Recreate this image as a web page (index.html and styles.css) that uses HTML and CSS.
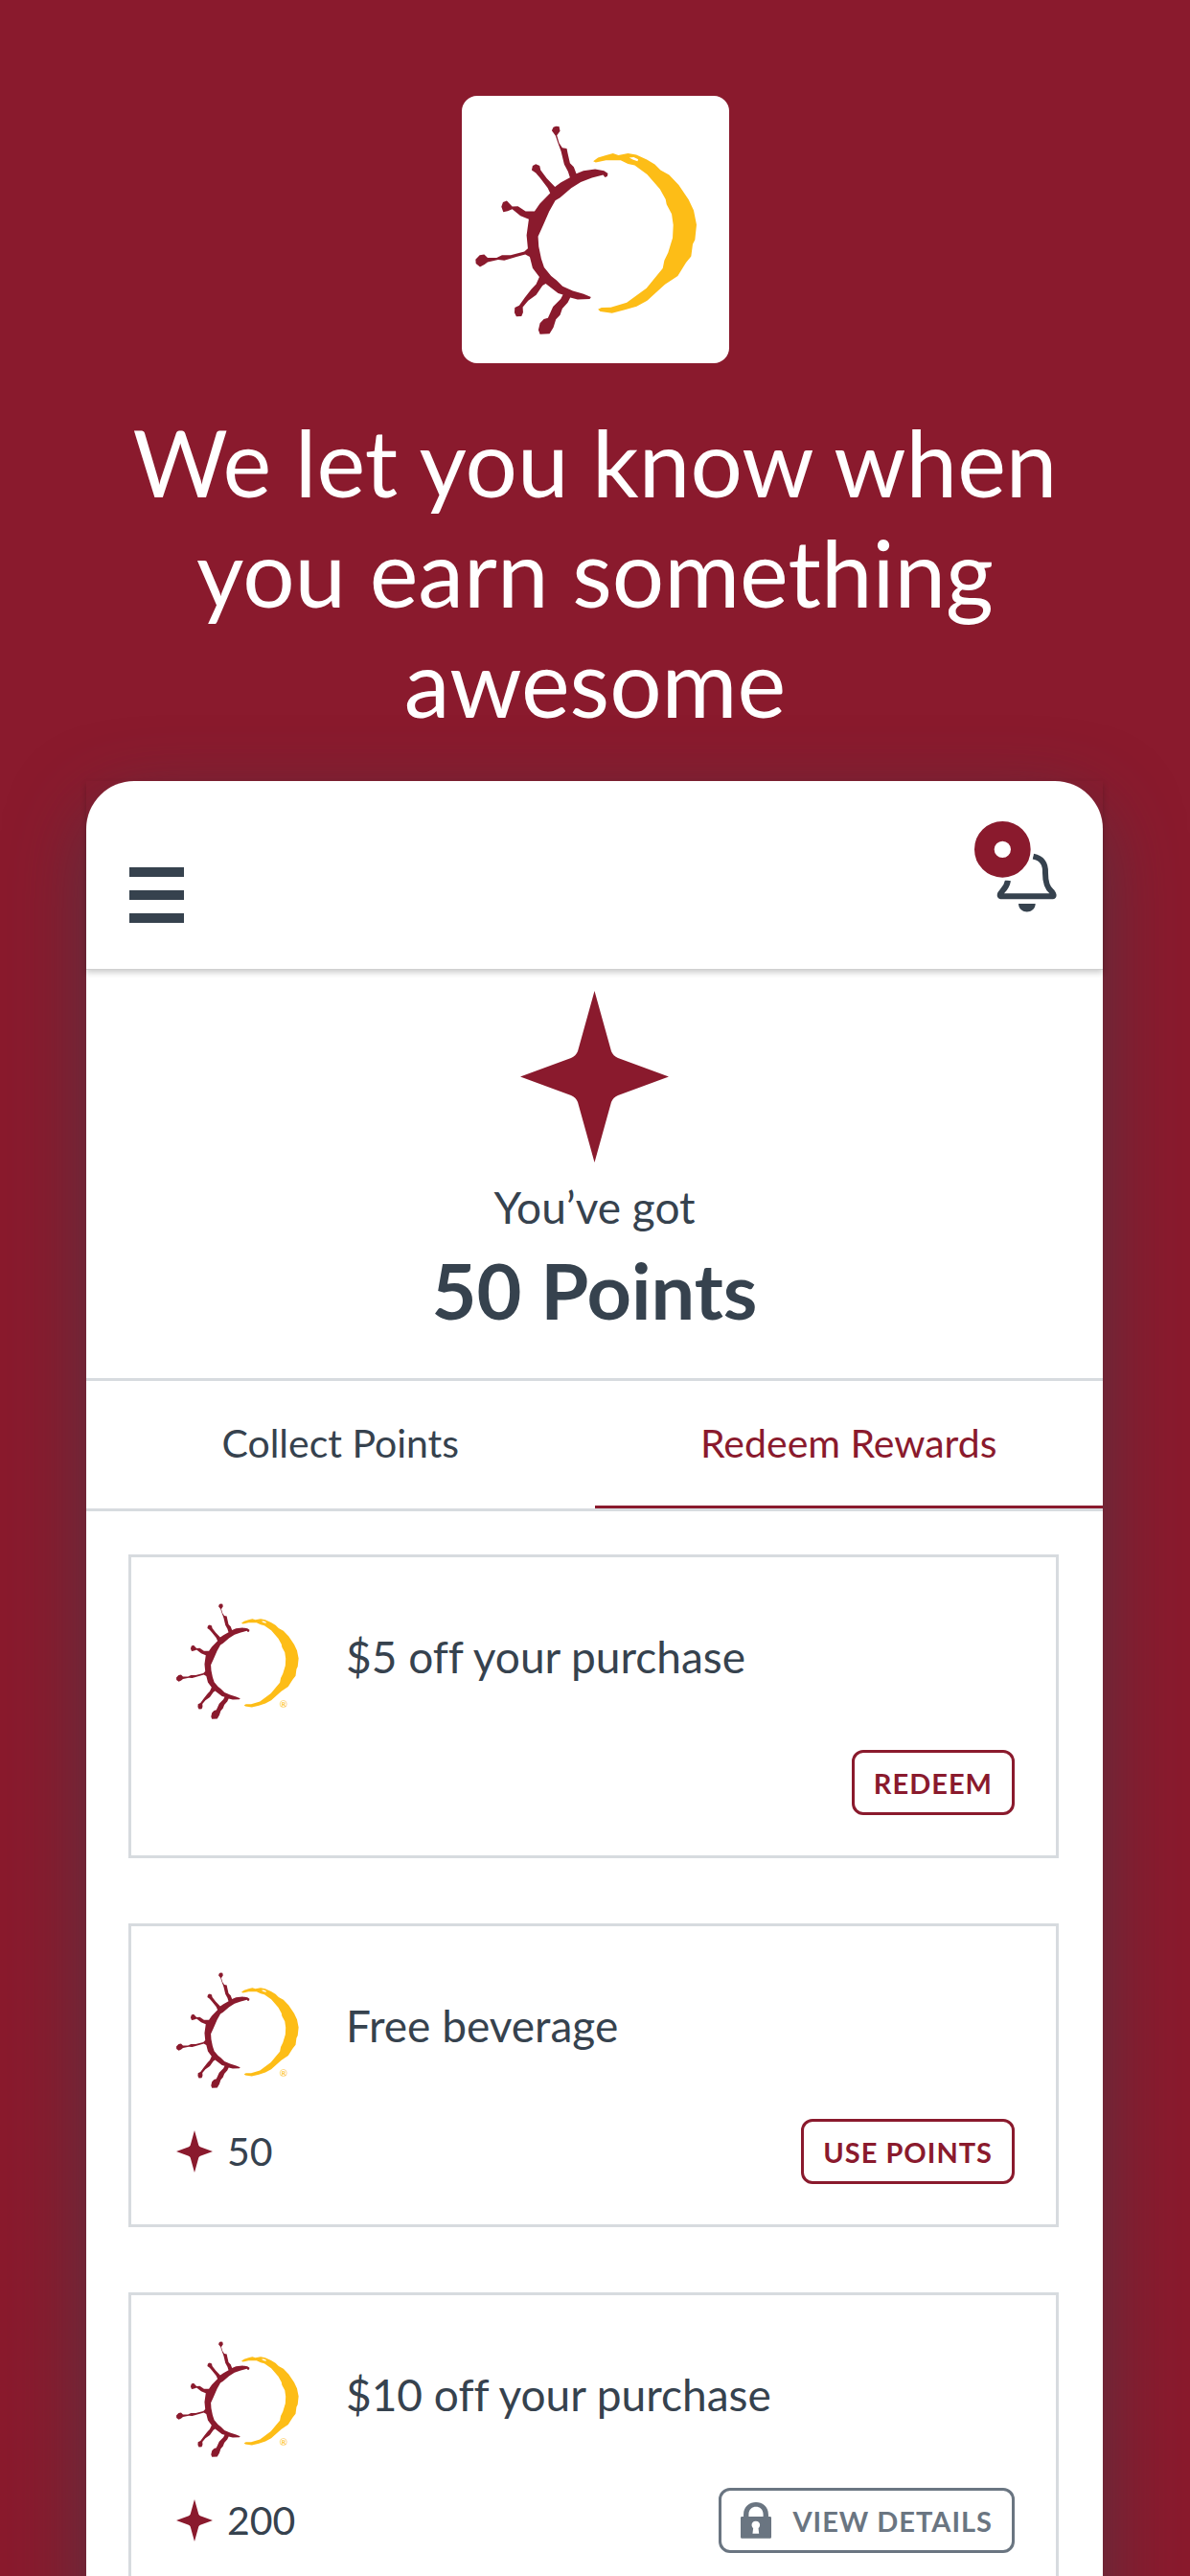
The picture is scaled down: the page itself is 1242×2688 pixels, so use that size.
FILE: index.html
```html
<!DOCTYPE html>
<html lang="en">
<head>
<meta charset="utf-8">
<meta name="viewport" content="width=device-width, initial-scale=1">
<title>Rewards</title>
<link rel="stylesheet" href="styles.css">
</head>
<body>
<svg class="sprite" aria-hidden="true">
  <symbol id="sun" viewBox="75 120 695 655">
    <path class="sun-rays" d="M314 136L319 125L327 122L337 123L340 137L330 151L337 175L347 190L361 192L364 207L371 238L383 250L391 271L413 262L450 257L478 262L490 270L488 279L481 282L475 275L440 284L405 297L375 316L340 346L325 355L306 389L286 435L271 468L273 499L281 538L290 565L312 592L329 605L348 624L380 638L414 648L437 658L433 664L395 665L372 659L364 675L347 694L340 714L327 728L319 753L307 773L277 774L272 761L277 740L289 727L302 723L318 688L342 664L349 650L334 646L295 616L285 622L265 651L240 669L223 689L224 706L219 718L203 719L197 707L198 691L212 684L229 660L250 633L265 617L275 595L254 567L245 532L231 524L203 532L165 543L146 541L113 548L103 556L89 563L76 553L75 540L88 526L102 524L113 535L141 535L158 526L185 526L228 515L239 505L235 464L242 414L216 403L190 382L176 388L162 391L156 375L161 360L173 356L190 374L208 373L232 389L260 389L276 366L309 332L301 315L277 284L264 269L251 260L254 246L264 241L276 246L279 260L298 285L324 312L342 299L371 283L365 264L353 242L343 200L333 173L326 152Z"/>
    <path class="sun-moon" fill-rule="evenodd" d="M444 232L459 221L484 213L506 207L523 213L553 207L579 212L612 227L637 242L655 260L682 275L712 306L743 352L759 386L768 431L763 478L756 492L751 530L735 550L709 592L669 618L613 669L580 687L543 698L503 708L466 703L459 696L470 691L499 690L549 675L611 630L662 568L667 543L679 518L693 472L695 432L690 397L674 367L671 351L653 319L613 273L574 245L553 240L530 229L484 229L452 236ZM557 221L571 219L585 226L583 232L568 227Z"/>
  </symbol>
  <symbol id="star" viewBox="0 0 155 179">
    <path d="M77.500 0L95 63Q97 68 102 70L155 89.500L102 109Q97 111 95 116L77.500 179L60 116Q58 111 53 109L0 89.500L53 70Q58 68 60 63Z"/>
  </symbol>
</svg>

<header class="hero">
  <div class="hero-badge"><svg class="hero-logo"><use href="#sun"/></svg></div>
  <h1>We let you know when you earn something awesome</h1>
</header>

<main class="panel">
  <div class="topbar">
    <button class="icon-button menu" type="button" aria-label="Menu"><span></span><span></span><span></span></button>
    <button class="icon-button" type="button" aria-label="Notifications">
      <svg class="bell" viewBox="0 0 258 285">
        <path d="M105 185Q102 203 87 219Q75 232 84 235H245Q252 234 242 220Q222 205 222 162C223 136 215 116 184 110" fill="none" stroke="#36424e" stroke-width="18"/>
        <path d="M138 258H191C190 292 139 292 138 258Z" fill="#36424e"/>
        <circle cx="88" cy="88" r="98" fill="#fff"/>
        <circle cx="88" cy="88" r="57" fill="none" stroke="#8a1a2d" stroke-width="62"/>
      </svg>
    </button>
  </div>

  <section class="summary">
    <svg class="summary-star"><use href="#star"/></svg>
    <p class="summary-label">You’ve got</p>
    <p class="summary-points">50 Points</p>
  </section>

  <nav class="tabs">
    <a href="#collect">Collect Points</a>
    <a class="active" href="#redeem" aria-current="page">Redeem Rewards</a>
  </nav>

  <div class="rewards">
    <article class="reward">
      <div class="reward-top">
        <div class="reward-mark"><svg class="reward-logo"><use href="#sun"/></svg><span class="reg">®</span></div>
        <h2>$5 off your purchase</h2>
      </div>
      <div class="reward-bottom">
        <button class="action" type="button">REDEEM</button>
      </div>
    </article>
    <article class="reward">
      <div class="reward-top">
        <div class="reward-mark"><svg class="reward-logo"><use href="#sun"/></svg><span class="reg">®</span></div>
        <h2>Free beverage</h2>
      </div>
      <div class="reward-bottom">
        <p class="cost"><svg><use href="#star"/></svg>50</p>
        <button class="action" type="button">USE POINTS</button>
      </div>
    </article>
    <article class="reward">
      <div class="reward-top">
        <div class="reward-mark"><svg class="reward-logo"><use href="#sun"/></svg><span class="reg">®</span></div>
        <h2>$10 off your purchase</h2>
      </div>
      <div class="reward-bottom">
        <p class="cost"><svg><use href="#star"/></svg>200</p>
        <button class="action locked" type="button">
          <svg class="lock" viewBox="0 0 95 112"><path fill-rule="evenodd" d="M9 44V38C9-13 86-13 86 38V44H91Q95 44 95 48V108Q95 112 91 112H4Q0 112 0 108V48Q0 44 4 44ZM25 44H70V37C70 6 25 6 25 37ZM47 58C33 58 31 74 39 80L37 97H57L55 80C63 74 61 58 47 58Z"/></svg>
          VIEW DETAILS
        </button>
      </div>
    </article>
  </div>
</main>
</body>
</html>
```
FILE: styles.css
```css
:root {
  --brand: #8a1a2d;
  --gold: #fdbd17;
  --ink: #36424e;
  --muted: #6a7581;
  --line: #d7dbdf;
}

* { box-sizing: border-box; }

body {
  margin: 0;
  height: 100vh;
  overflow: hidden;
  display: flex;
  flex-direction: column;
  background: var(--brand);
  color: var(--ink);
  font-family: Lato, "Open Sans", sans-serif;
  font-variant-ligatures: none;
}

h1, h2, p { margin: 0; font-weight: 400; }

button {
  font-family: inherit;
  background: none;
  border: 0;
  padding: 0;
}

.sprite { position: absolute; width: 0; height: 0; }
.sun-rays { fill: var(--brand); }
.sun-moon { fill: var(--gold); }

.hero {
  flex: none;
  display: flex;
  flex-direction: column;
  align-items: center;
  padding: 100px 120px 0;
}

.hero-badge {
  width: 279px;
  height: 279px;
  padding: 31px 14px;
  border-radius: 16px;
  background: #fff;
}

.hero-logo { display: block; width: 232px; height: 218px; }

h1 {
  margin-top: 45px;
  max-width: 1000px;
  color: #fff;
  font-size: 96px;
  line-height: 115px;
  text-align: center;
}

.panel {
  flex: none;
  margin: 46px 91px 0 90px;
  border-radius: 50px 50px 0 0;
  background: #fff;
  box-shadow: 0 26px 80px rgba(54, 66, 78, 0.6);
}

.topbar {
  display: flex;
  justify-content: space-between;
  align-items: flex-start;
  height: 197px;
  padding: 42px 48px 0 45px;
  border-bottom: 1px solid #d0d0d0;
  box-shadow: 0 3px 6px rgba(0, 0, 0, 0.2);
}

.menu {
  display: flex;
  flex-direction: column;
  gap: 14px;
  margin-top: 48px;
  width: 57px;
}

.menu span { height: 10px; background: var(--ink); }

.bell { display: block; width: 86px; height: 95px; }

.summary {
  display: flex;
  flex-direction: column;
  align-items: center;
  padding: 22px 0 44px;
}

.summary-star { width: 155px; height: 179px; fill: var(--brand); }
.summary-label { margin-top: 19px; font-size: 46px; line-height: 56px; }
.summary-points { margin-top: 10px; font-size: 81px; font-weight: 700; line-height: 96px; }

.tabs {
  display: grid;
  grid-template-columns: 1fr 1fr;
  border-top: 3px solid var(--line);
  border-bottom: 3px solid var(--line);
}

.tabs a {
  border-bottom: 3px solid transparent;
  color: var(--ink);
  font-size: 41px;
  line-height: 130px;
  text-align: center;
  text-decoration: none;
}

.tabs .active { color: var(--brand); border-color: var(--brand); }

.rewards {
  display: grid;
  gap: 68px;
  padding: 45px 46px 60px 44px;
}

.reward {
  height: 317px;
  padding: 48px 43px 42px 47px;
  border: 3px solid var(--line);
  display: flex;
  flex-direction: column;
  justify-content: space-between;
}

.reward-top { display: flex; align-items: center; gap: 49px; }
.reward-mark { position: relative; height: 121px; }
.reward-logo { display: block; width: 128px; height: 121px; }

.reg {
  position: absolute;
  right: 12px;
  bottom: 11px;
  color: var(--gold);
  font-size: 10px;
  line-height: 10px;
}

h2 { margin-bottom: 10px; font-size: 46px; line-height: 56px; }

.reward-bottom { display: flex; align-items: center; }

.cost {
  display: flex;
  align-items: center;
  gap: 15px;
  font-size: 41px;
  line-height: 48px;
}

.cost svg { width: 38px; height: 44px; fill: var(--brand); }

.action {
  display: flex;
  align-items: center;
  gap: 24px;
  height: 68px;
  margin-left: auto;
  padding: 0 20px;
  border: 3px solid currentColor;
  border-radius: 12px;
  color: var(--brand);
  font-size: 29px;
  font-weight: 700;
  letter-spacing: 1px;
}

.locked { gap: 22px; color: var(--muted); }
.lock { width: 32px; height: 38px; fill: currentColor; }
```
